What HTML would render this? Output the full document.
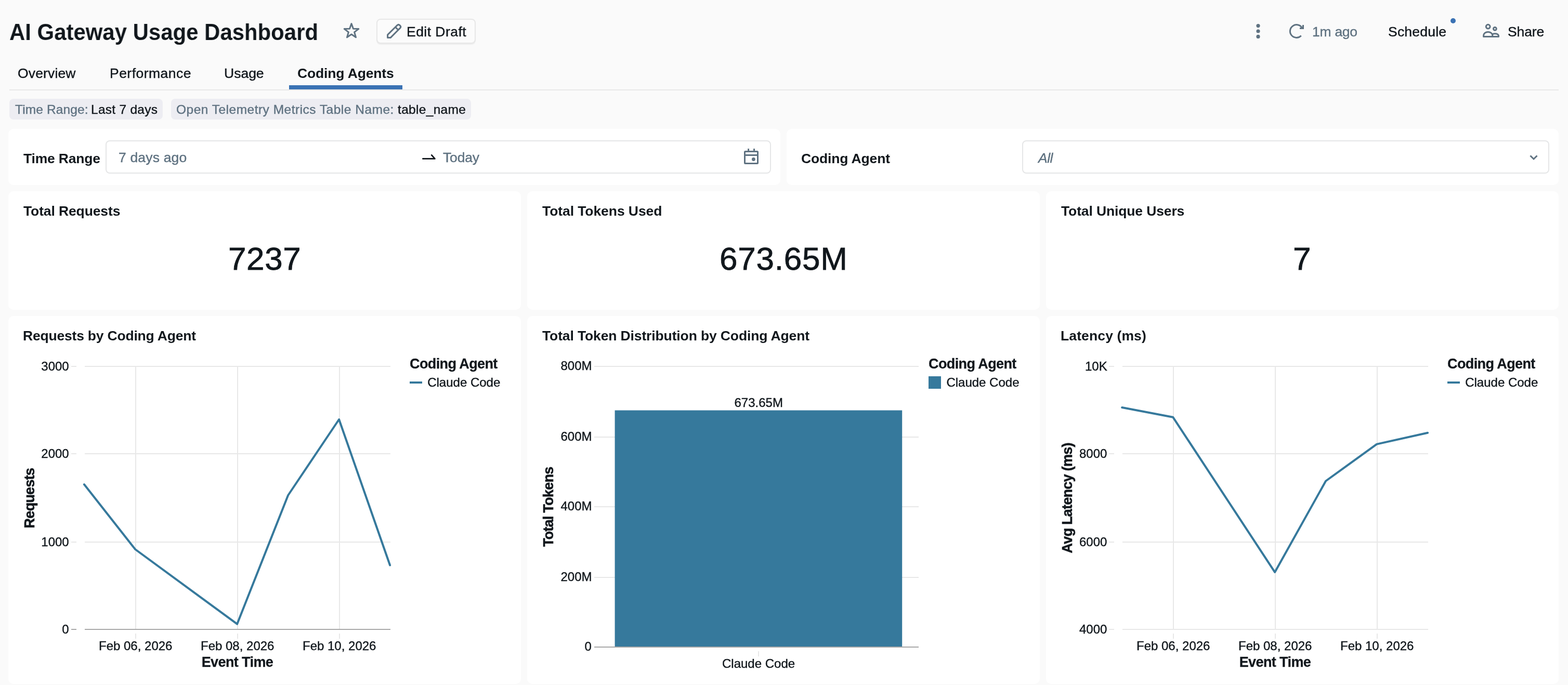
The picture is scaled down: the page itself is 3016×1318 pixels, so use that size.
<!DOCTYPE html>
<html lang="en">
<head>
<meta charset="utf-8">
<title>AI Gateway Usage Dashboard</title>
<style>
*{box-sizing:border-box}
html,body{margin:0;padding:0}
body{width:3016px;height:1318px;overflow:hidden;position:relative;background:#fafafa;color:#11171c;font-family:"Liberation Sans",Arial,Helvetica,sans-serif;-webkit-font-smoothing:antialiased}
.t{position:absolute;margin:0;padding:0;white-space:pre;line-height:1;font-weight:400;will-change:transform;-webkit-text-stroke:0.4px currentColor}
.b{-webkit-text-stroke:0}
#k1v,#k2v,#k3v{-webkit-text-stroke:0.8px currentColor}
.card{position:absolute;background:#fff;border-radius:10px}
.chip{position:absolute;top:190px;height:40px;border-radius:8px;background:#ededf2}
.box{position:absolute;top:270px;height:64px;border:2px solid #e5e6e7;border-radius:8px;background:#fff}
.ico{position:absolute;overflow:visible}
#tabline{position:absolute;left:18px;top:172px;width:2980px;height:2px;background:#e8e8e8}
#tabsel{position:absolute;left:556px;top:164px;width:218px;height:8px;background:#3a72b4}
#editbtn{position:absolute;left:724px;top:36px;width:190.6px;height:48px;border:2px solid #e7e7e7;border-radius:8px;background:#fbfbfb;box-shadow:0 2px 1px rgba(0,0,0,.05)}
#dot{position:absolute;left:2790px;top:35px;width:10px;height:10px;border-radius:50%;background:#3a72b4}
#charts{position:absolute;left:0;top:0;width:3016px;height:1318px;will-change:transform}
#charts text{font-family:"Liberation Sans",Arial,Helvetica,sans-serif;fill:#11171c;stroke:#11171c;stroke-width:0.4px}
#charts text[font-weight]{stroke-width:0.3px}
#charts text[transform]{stroke-width:0.6px}
#title{left:18.07px;top:39.2px;font-size:45px;font-weight:700;letter-spacing:0.04px;transform:scaleX(0.93);transform-origin:0 0;}
#edit{left:782.1px;top:47.8px;font-size:26.5px;letter-spacing:0.46px;}
#ago{left:2523.5px;top:48px;font-size:26.5px;color:#5f7281;letter-spacing:-0.26px;}
#sched{left:2670px;top:48px;font-size:26.5px;letter-spacing:0.21px;}
#share{left:2900px;top:48px;font-size:26.5px;letter-spacing:-0.12px;}
#tab1{left:34.3px;top:127.7px;font-size:26.5px;letter-spacing:0.14px;}
#tab2{left:210.6px;top:127.7px;font-size:26.5px;letter-spacing:0.47px;}
#tab3{left:431px;top:127.7px;font-size:26.5px;}
#tab4{left:571.7px;top:127.7px;font-size:26.5px;font-weight:700;letter-spacing:-0.14px;}
#chip1a{left:28.9px;top:199.3px;font-size:24.5px;color:#5f7281;letter-spacing:0.11px;}
#chip1b{left:174.8px;top:199.3px;font-size:24.5px;letter-spacing:0.27px;}
#chip2a{left:339.4px;top:199.3px;font-size:24.5px;color:#5f7281;letter-spacing:0.49px;}
#chip2b{left:764.8px;top:199.3px;font-size:24.5px;letter-spacing:0.32px;}
#f1l{left:45.3px;top:292px;font-size:26.5px;font-weight:700;letter-spacing:-0.2px;}
#f1a{left:228px;top:290px;font-size:26.5px;color:#5f7281;letter-spacing:0.17px;}
#f1b{left:852px;top:290px;font-size:26.5px;color:#5f7281;letter-spacing:-0.15px;}
#f2l{left:1540.9px;top:292px;font-size:26.5px;font-weight:700;letter-spacing:-0.15px;}
#f2a{left:1997px;top:290.8px;font-size:26.5px;font-style:italic;color:#5f7281;letter-spacing:-0.5px;}
#k1t{left:45.2px;top:393px;font-size:26.5px;font-weight:700;letter-spacing:-0.12px;}
#k2t{left:1043.2px;top:393px;font-size:26.5px;font-weight:700;letter-spacing:-0.08px;}
#k3t{left:2041.2px;top:393px;font-size:26.5px;font-weight:700;letter-spacing:-0.13px;}
#k1v{left:438.5px;top:467px;font-size:62px;letter-spacing:0.63px;}
#k2v{left:1383.6px;top:467px;font-size:62px;letter-spacing:0.77px;}
#k3v{left:2487px;top:467px;font-size:62px;}
#c1t{left:44px;top:633px;font-size:26.5px;font-weight:700;letter-spacing:-0.2px;}
#c2t{left:1043.2px;top:633px;font-size:26.5px;font-weight:700;letter-spacing:-0.13px;}
#c3t{left:2040.4px;top:633px;font-size:26.5px;font-weight:700;letter-spacing:0.12px;}
</style>
</head>
<body>
<header>
<h1 class="t b" id="title">AI Gateway Usage Dashboard</h1>
<svg class="ico" style="left:656px;top:40px" width="40" height="40" viewBox="656 40 40 40"><path d="M676.00 45.60 L679.47 55.33 L689.79 55.62 L681.61 61.92 L684.52 71.83 L676.00 66.00 L667.48 71.83 L670.39 61.92 L662.21 55.62 L672.53 55.33Z" fill="none" stroke="#5f7281" stroke-width="3" stroke-linejoin="round"/></svg>
<div id="editbtn"></div>
<svg class="ico" style="left:740px;top:42px" width="36" height="36" viewBox="740 42 36 36"><path d="M745.6 72.6 V66.9 L764.3 48.4 Q766.5 46.3 768.6 48.4 L769.8 49.6 Q771.8 51.7 769.7 53.9 L751.1 72.6 Z M760.6 52.1 L765.9 57.5" fill="none" stroke="#5f7281" stroke-width="3" stroke-linejoin="round"/></svg>
<span class="t" id="edit">Edit Draft</span>
<svg class="ico" style="left:2412px;top:44px" width="16" height="32" viewBox="2412 44 16 32"><circle cx="2420" cy="49.6" r="3.6" fill="#5f7281"/><circle cx="2420" cy="60" r="3.6" fill="#5f7281"/><circle cx="2420" cy="70.4" r="3.6" fill="#5f7281"/></svg>
<svg class="ico" style="left:2476px;top:42px" width="36" height="36" viewBox="2476 42 36 36"><path d="M2504.85 54.37 A12.4 12.4 0 1 0 2502.72 68.61" fill="none" stroke="#5f7281" stroke-width="3"/><path d="M2506.5 47.9 V54.4 H2500" fill="none" stroke="#5f7281" stroke-width="3"/></svg>
<span class="t" id="ago">1m ago</span>
<span class="t" id="sched">Schedule</span>
<div id="dot"></div>
<svg class="ico" style="left:2850px;top:44px" width="36" height="30" viewBox="2850 44 36 30"><g fill="none" stroke="#5f7281" stroke-width="3" stroke-linejoin="round"><circle cx="2862.2" cy="51.2" r="3.9"/><path d="M2853.6 70.5 V68.2 A8.6 6.8 0 0 1 2870.8 68.2 V70.5 Z"/><circle cx="2875.4" cy="55.3" r="2.9"/><path d="M2870.8 70.5 H2882.5 V68.6 Q2881.4 64.7 2875.6 64.7 Q2873 64.7 2870.6 65.8"/></g></svg>
<span class="t" id="share">Share</span>
</header>
<nav>
<div id="tabline"></div><div id="tabsel"></div>
<span class="t" id="tab1">Overview</span>
<span class="t" id="tab2">Performance</span>
<span class="t" id="tab3">Usage</span>
<span class="t b" id="tab4">Coding Agents</span>
</nav>
<div class="chip" style="left:18px;width:295px"></div>
<div class="chip" style="left:329px;width:577.4px"></div>
<span class="t" id="chip1a">Time Range:</span>
<span class="t" id="chip1b">Last 7 days</span>
<span class="t" id="chip2a">Open Telemetry Metrics Table Name:</span>
<span class="t" id="chip2b">table_name</span>
<section class="card" style="left:16px;top:248px;width:1485px;height:108px"></section>
<section class="card" style="left:1513px;top:248px;width:1485px;height:108px"></section>
<span class="t b" id="f1l">Time Range</span>
<div class="box" style="left:203px;width:1280px"></div>
<span class="t" id="f1a">7 days ago</span>
<svg class="ico" style="left:808px;top:292px" width="34" height="20" viewBox="808 292 34 20"><path d="M813.4 305.4 H836.4 L830.2 298.4" fill="none" stroke="#11171c" stroke-width="2.8" stroke-linecap="round" stroke-linejoin="round"/></svg>
<span class="t" id="f1b">Today</span>
<svg class="ico" style="left:1428px;top:284px" width="34" height="34" viewBox="1428 284 34 34"><g fill="none" stroke="#5f7281" stroke-width="3"><rect x="1432.5" y="291.5" width="25" height="23" rx="1"/><path d="M1432.5 298.6 H1457.5 M1439.6 286 V291.5 M1450.5 286 V291.5"/></g><circle cx="1449.4" cy="306.5" r="3.4" fill="#5f7281"/></svg>
<span class="t b" id="f2l">Coding Agent</span>
<div class="box" style="left:1966px;width:1014px"></div>
<span class="t" id="f2a">All</span>
<svg class="ico" style="left:2938px;top:294px" width="24" height="18" viewBox="2938 294 24 18"><path d="M2943.5 299.5 L2950 306 L2956.5 299.5" fill="none" stroke="#5f7281" stroke-width="3"/></svg>
<section class="card" style="left:16px;top:368px;width:986px;height:228px"></section>
<section class="card" style="left:1014px;top:368px;width:986px;height:228px"></section>
<section class="card" style="left:2012px;top:368px;width:986px;height:228px"></section>
<span class="t b" id="k1t">Total Requests</span>
<span class="t" id="k1v">7237</span>
<span class="t b" id="k2t">Total Tokens Used</span>
<span class="t" id="k2v">673.65M</span>
<span class="t b" id="k3t">Total Unique Users</span>
<span class="t" id="k3v">7</span>
<section class="card" style="left:16px;top:608px;width:986px;height:708px"></section>
<section class="card" style="left:1014px;top:608px;width:986px;height:708px"></section>
<section class="card" style="left:2012px;top:608px;width:986px;height:708px"></section>
<span class="t b" id="c1t">Requests by Coding Agent</span>
<span class="t b" id="c2t">Total Token Distribution by Coding Agent</span>
<span class="t b" id="c3t">Latency (ms)</span>
<svg id="charts" width="3016" height="1318" viewBox="0 0 3016 1318">
<rect x="260" y="704" width="2" height="507" fill="#e8e8e8"/>
<rect x="260" y="1219" width="2" height="10" fill="#e8e8e8"/>
<rect x="456" y="704" width="2" height="507" fill="#e8e8e8"/>
<rect x="456" y="1219" width="2" height="10" fill="#e8e8e8"/>
<rect x="652" y="704" width="2" height="507" fill="#e8e8e8"/>
<rect x="652" y="1219" width="2" height="10" fill="#e8e8e8"/>
<rect x="137" y="704" width="10" height="2" fill="#e8e8e8"/>
<rect x="163" y="704" width="588" height="2" fill="#e8e8e8"/>
<rect x="137" y="872" width="10" height="2" fill="#e8e8e8"/>
<rect x="163" y="872" width="588" height="2" fill="#e8e8e8"/>
<rect x="137" y="1042" width="10" height="2" fill="#e8e8e8"/>
<rect x="163" y="1042" width="588" height="2" fill="#e8e8e8"/>
<rect x="137" y="1210" width="10" height="2" fill="#a8a8a8"/>
<rect x="163" y="1210" width="588" height="2" fill="#a8a8a8"/>
<path d="M161.9 932 L260.2 1057 L456.1 1200.7 L554.1 953 L652.1 807 L750.1 1087.5" fill="none" stroke="#36799c" stroke-width="4" stroke-linejoin="round" stroke-linecap="round"/>
<rect x="788" y="734" width="24" height="4" fill="#36799c"/>
<rect x="1143" y="704" width="624" height="2" fill="#e8e8e8"/>
<rect x="1143" y="840" width="624" height="2" fill="#e8e8e8"/>
<rect x="1143" y="974" width="624" height="2" fill="#e8e8e8"/>
<rect x="1143" y="1110" width="624" height="2" fill="#e8e8e8"/>
<rect x="1143" y="1244" width="624" height="2" fill="#a8a8a8"/>
<rect x="1182.6" y="789.5" width="552.6" height="454.5" fill="#36799c"/>
<rect x="1458" y="1253" width="2" height="10" fill="#e8e8e8"/>
<rect x="1786" y="724" width="24" height="24" fill="#36799c"/>
<rect x="2256" y="704" width="2" height="507" fill="#e8e8e8"/>
<rect x="2256" y="1219" width="2" height="10" fill="#e8e8e8"/>
<rect x="2452" y="704" width="2" height="507" fill="#e8e8e8"/>
<rect x="2452" y="1219" width="2" height="10" fill="#e8e8e8"/>
<rect x="2648" y="704" width="2" height="507" fill="#e8e8e8"/>
<rect x="2648" y="1219" width="2" height="10" fill="#e8e8e8"/>
<rect x="2133" y="704" width="10" height="2" fill="#e8e8e8"/>
<rect x="2159" y="704" width="588" height="2" fill="#e8e8e8"/>
<rect x="2133" y="872" width="10" height="2" fill="#e8e8e8"/>
<rect x="2159" y="872" width="588" height="2" fill="#e8e8e8"/>
<rect x="2133" y="1042" width="10" height="2" fill="#e8e8e8"/>
<rect x="2159" y="1042" width="588" height="2" fill="#e8e8e8"/>
<rect x="2133" y="1210" width="10" height="2" fill="#e8e8e8"/>
<rect x="2159" y="1210" width="588" height="2" fill="#e8e8e8"/>
<path d="M2158.2 784 L2256.3 802.8 L2452.1 1100.9 L2550.1 925.5 L2648.1 854.6 L2746.1 832.8" fill="none" stroke="#36799c" stroke-width="4" stroke-linejoin="round" stroke-linecap="round"/>
<rect x="2784" y="734" width="24" height="4" fill="#36799c"/>
<text x="79.3" y="713" font-size="24">3000</text>
<text x="79.3" y="881" font-size="24">2000</text>
<text x="79.3" y="1051" font-size="24">1000</text>
<text x="119.3" y="1219" font-size="24">0</text>
<text x="190" y="1251" font-size="24">Feb 06, 2026</text>
<text x="386" y="1251" font-size="24">Feb 08, 2026</text>
<text x="582" y="1251" font-size="24">Feb 10, 2026</text>
<text x="387.7" y="1282.6" font-size="27" font-weight="700" letter-spacing="-0.6">Event Time</text>
<text transform="rotate(-90)" x="-1016.38" y="66.3" font-size="27" font-weight="700" letter-spacing="-0.75">Requests</text>
<text x="788" y="709.3" font-size="27" font-weight="700" letter-spacing="-0.6">Coding Agent</text>
<text x="822.2" y="744.3" font-size="24">Claude Code</text>
<text x="1078.5" y="712" font-size="24">800M</text>
<text x="1078.5" y="848" font-size="24">600M</text>
<text x="1078.5" y="982" font-size="24">400M</text>
<text x="1078.5" y="1118" font-size="24">200M</text>
<text x="1124.5" y="1252" font-size="24">0</text>
<text x="1412.5" y="782.7" font-size="24">673.65M</text>
<text x="1389" y="1284.7" font-size="24">Claude Code</text>
<text transform="rotate(-90)" x="-1051.88" y="1064" font-size="27" font-weight="700" letter-spacing="-0.75">Total Tokens</text>
<text x="1786" y="709.3" font-size="27" font-weight="700" letter-spacing="-0.6">Coding Agent</text>
<text x="1820.4" y="744.3" font-size="24">Claude Code</text>
<text x="2087" y="713" font-size="24">10K</text>
<text x="2076" y="881" font-size="24">8000</text>
<text x="2076" y="1051" font-size="24">6000</text>
<text x="2076" y="1219" font-size="24">4000</text>
<text x="2186" y="1251" font-size="24">Feb 06, 2026</text>
<text x="2382" y="1251" font-size="24">Feb 08, 2026</text>
<text x="2578" y="1251" font-size="24">Feb 10, 2026</text>
<text x="2383.7" y="1282.6" font-size="27" font-weight="700" letter-spacing="-0.6">Event Time</text>
<text transform="rotate(-90)" x="-1064.38" y="2062" font-size="27" font-weight="700" letter-spacing="-0.75">Avg Latency (ms)</text>
<text x="2784" y="709.3" font-size="27" font-weight="700" letter-spacing="-0.6">Coding Agent</text>
<text x="2818.2" y="744.3" font-size="24">Claude Code</text>
</svg>
</body>
</html>
